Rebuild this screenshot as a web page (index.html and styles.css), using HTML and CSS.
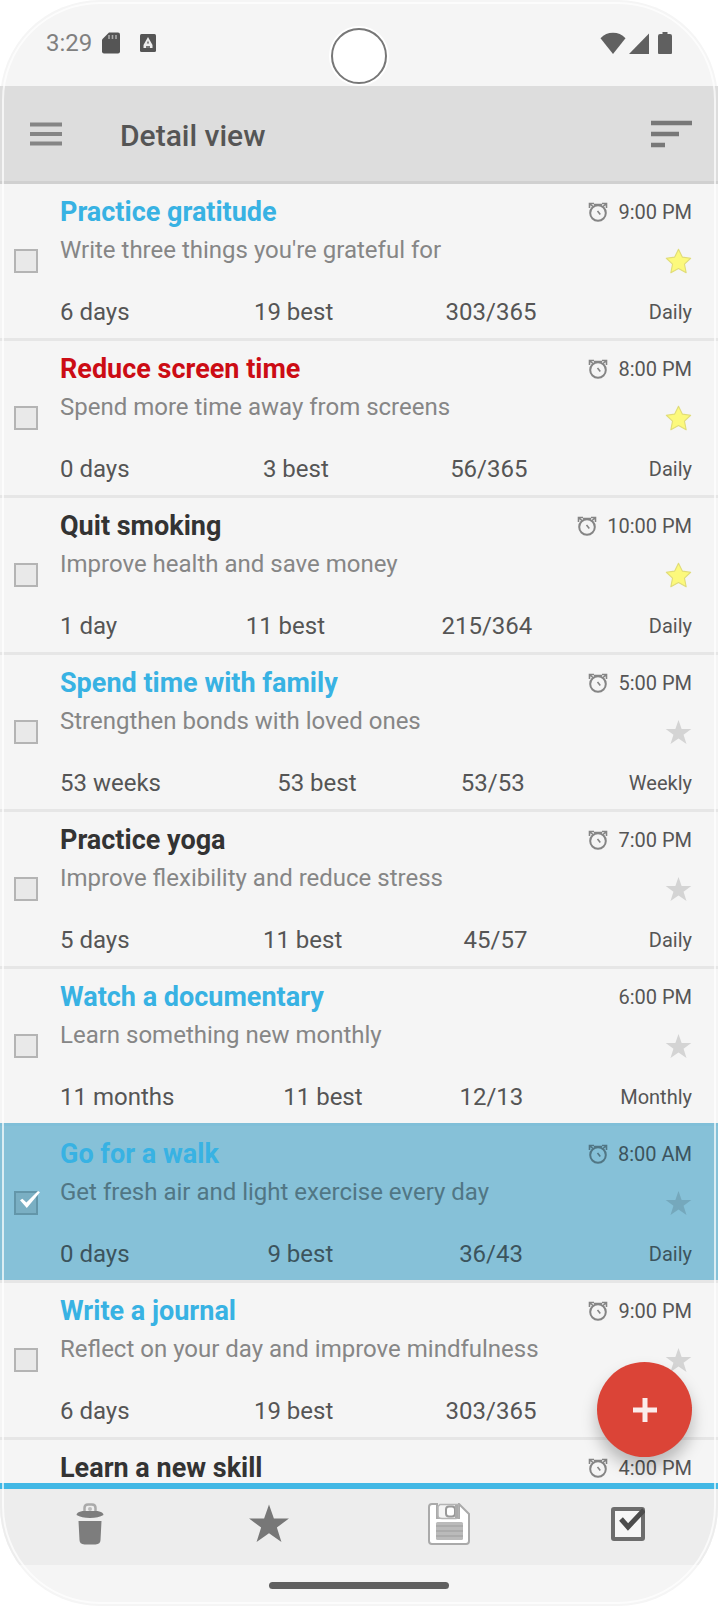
FILE: index.html
```html
<!DOCTYPE html>
<html lang="en">
<head>
    <meta charset="UTF-8">
    <meta name="viewport" content="width=device-width, initial-scale=1.0">
    <title>Detail view</title>
    <link rel="stylesheet" href="styles.css">
</head>
<body>
    <!-- Shared icons -->
    <svg class="icon-defs" aria-hidden="true">
        <symbol id="icon-star" viewBox="0 0 24 24">
            <path d="M12 0.8l2.8 8.1h8.6l-6.9 5.1 2.6 8.3L12 17.3l-7.1 5 2.6-8.3L0.6 8.9h8.6z"/>
        </symbol>
        <symbol id="icon-star-wide" viewBox="0 0 24 24">
            <path d="M12 1.2l3.4 6.9 7.4 1-5.500 5.200 1.500 7.700L12 18.300 5.200 22l1.500-7.700L1.200 9.100l7.400-1z" stroke-linejoin="round"/>
        </symbol>
        <symbol id="icon-alarm" viewBox="0 0 20 20">
            <circle cx="10" cy="11" r="7.8" fill="none" stroke="currentColor" stroke-width="2"/>
            <path d="M1.500 6V1.500H6M18.500 6V1.500H14M2 2l3 2.500M18 2l-3 2.500M6 2.600h8M9.500 9l2.800 3.500" fill="none" stroke="currentColor" stroke-width="1.600"/>
        </symbol>
    </svg>

    <div class="phone">
        <!-- Status bar -->
        <div class="status-bar">
            <div class="status-left">
                <span class="clock">3:29</span>
                <svg class="sd-icon" width="18" height="22" viewBox="0 0 18 22">
                    <path d="M7 0.5h9a2 2 0 0 1 2 2v17a2 2 0 0 1-2 2H2a2 2 0 0 1-2-2V7.5z" fill="#555"/>
                    <path d="M7 3v4M10.5 3v4M14 3v4" stroke="#aaa" stroke-width="1.6"/>
                </svg>
                <svg width="16" height="18" viewBox="0 0 16 18">
                    <rect width="16" height="18" rx="1.5" fill="#555"/>
                    <path d="M8 3l4.5 8v3h-9v-3z" fill="#eee"/>
                    <path d="M8 6.5l1.2 3H6.8zM6 12h4v2H6z" fill="#777"/>
                </svg>
            </div>
            <div class="status-right">
                <svg width="26" height="22" viewBox="0 0 26 22"><path d="M13 22L0.5 6.2C4 2.600 8.200 0.800 13 0.800s9 1.800 12.500 5.400z"/></svg>
                <svg width="20" height="22" viewBox="0 0 20 22"><path d="M20 1.500V22H0z"/></svg>
                <svg class="battery-icon" width="14" height="22" viewBox="0 0 14 22"><path d="M4.500 0h5v2H12a2 2 0 0 1 2 2v17a1 1 0 0 1-1 1H1a1 1 0 0 1-1-1V4a2 2 0 0 1 2-2h2.500z"/></svg>
            </div>
            <div class="camera"></div>
        </div>

        <!-- App bar -->
        <header class="app-bar">
            <button class="icon-button" aria-label="Menu">
                <svg width="32" height="24" viewBox="0 0 32 24"><path d="M0 2.500h32M0 12h32M0 21.500h32" stroke="#858585" stroke-width="4"/></svg>
            </button>
            <h1>Detail view</h1>
            <button class="icon-button" aria-label="Sort">
                <svg width="41" height="28" viewBox="0 0 41 28"><path d="M0 3h41M0 14h28M0 25h14" stroke="#787878" stroke-width="4.500"/></svg>
            </button>
        </header>

        <!-- Habit list -->
        <main class="content">
            <ul class="habit-list" id="habitList"></ul>
            <button class="fab" aria-label="Add">
                <svg width="24" height="24" viewBox="0 0 24 24"><path d="M12 0v24M0 12h24" stroke="#fbeceb" stroke-width="5"/></svg>
            </button>
        </main>

        <!-- Bottom toolbar -->
        <footer class="footer">
            <div class="toolbar">
                <button class="icon-button" aria-label="Delete">
                    <svg width="28" height="42" viewBox="0 0 28 42">
                        <path d="M8.500 9V5q0-3.500 3.500-3.500h4q3.500 0 3.500 3.500v4" fill="none" stroke="#aaa" stroke-width="2.500"/>
                        <circle cx="14" cy="6" r="2" fill="#bbb"/>
                        <path d="M0.500 12q0-3 6-4h15q6 1 6 4-5 3-13.500 3T0.500 12z" fill="#7d7d7d"/>
                        <path d="M2.500 18h23l-1 19q0 4-5 4.500H8.500q-5-.5-5-4.500z" fill="#7d7d7d"/>
                    </svg>
                </button>
                <button class="icon-button" aria-label="Favorite">
                    <svg width="42" height="42" fill="#777"><use href="#icon-star"/></svg>
                </button>
                <button class="icon-button" aria-label="Save">
                    <svg width="42" height="42" viewBox="0 0 42 42">
                        <path d="M4 1h5v14h22V1l10 10v27q0 3-3 3H4q-3 0-3-3V4q0-3 3-3z" fill="#fff" stroke="#aaa" stroke-width="2"/>
                        <path d="M12 1.500h18v12q0 2-2 2H14q-4 0-4-3V3.500z" fill="#f4f4f4" stroke="#b4b4b4" stroke-width="1.500"/>
                        <rect x="18" y="3.500" width="9" height="10" rx="3" fill="#fff" stroke="#999" stroke-width="2"/>
                        <path d="M28.500 2v13" stroke="#aaa" stroke-width="3"/>
                        <rect x="8" y="19" width="27" height="18" rx="1.500" fill="#bababa"/>
                        <path d="M8 23h27M8 28h27M8 33h27" stroke="#a6a6a6" stroke-width="1.500"/>
                    </svg>
                </button>
                <button class="icon-button" aria-label="Select all">
                    <svg width="34" height="34" viewBox="0 0 34 34">
                        <rect x="2" y="2" width="30" height="30" rx="1" fill="#f6f6f6" stroke="#6d6d6d" stroke-width="4"/>
                        <path d="M10 12l7 8L33 3" fill="none" stroke="#4c4c4c" stroke-width="5"/>
                    </svg>
                </button>
            </div>
            <div class="nav-bar"><div class="nav-handle"></div></div>
        </footer>
    </div>

    <script src="script.js"></script>
</body>
</html>
```

FILE: styles.css
```css
* {
    margin: 0;
    padding: 0;
    box-sizing: border-box;
}

body {
    font-family: Roboto, "Noto Sans", sans-serif;
    background: #fff;
    color: #555;
    padding-right: 2px;
}

button {
    background: none;
    border: none;
    font: inherit;
    cursor: pointer;
}

svg {
    display: block;
    flex-shrink: 0;
}

.icon-defs {
    position: absolute;
    width: 0;
    height: 0;
}

.icon-button {
    display: flex;
    align-items: center;
    justify-content: center;
}

/* Phone frame */
.phone {
    position: relative;
    display: flex;
    flex-direction: column;
    height: 100vh;
    background: #f5f5f5;
    border-radius: 100px;
}

.phone::after {
    content: "";
    position: absolute;
    inset: 2px;
    border: 2px solid rgba(255, 255, 255, 0.7);
    border-radius: 98px;
    pointer-events: none;
}

/* Status bar */
.status-bar {
    position: relative;
    display: flex;
    justify-content: space-between;
    align-items: center;
    height: 86px;
    padding: 0 46px;
}

.status-left,
.status-right {
    display: flex;
    align-items: center;
}

.status-right {
    gap: 3px;
    fill: #606060;
}

.battery-icon {
    margin-left: 6px;
}

.clock {
    font-size: 24px;
    color: #808080;
}

.sd-icon {
    margin: 0 20px 0 10px;
}

.camera {
    position: absolute;
    top: 28px;
    left: 50%;
    width: 56px;
    height: 56px;
    margin-left: -28px;
    background: #fff;
    border: 2px solid #777;
    border-radius: 50%;
    box-shadow: 0 0 0 2px #fff;
}

/* App bar */
.app-bar {
    display: flex;
    align-items: center;
    height: 95px;
    padding: 0 26px 0 30px;
    background: #ddd;
}

.app-bar h1 {
    flex: 1;
    margin-left: 58px;
    padding-top: 3px;
    font-size: 30px;
    font-weight: 500;
    color: #555;
}

/* Habit list */
.content {
    position: relative;
    flex: 1;
    min-height: 0;
}

.habit-list {
    height: 100%;
    overflow: hidden;
    list-style: none;
}

.habit {
    display: flex;
    align-items: center;
    height: 157px;
    padding: 0 26px 0 14px;
    border-top: 3px solid #e6e6e6;
}

.habit:first-child {
    border-top-color: #d0d0d0;
}

.habit.selected {
    background: #86c1d8;
    border-top-color: #80bfd8;
}

.habit-check {
    appearance: none;
    position: relative;
    flex-shrink: 0;
    width: 24px;
    height: 24px;
    margin-right: 22px;
    background: #e9e9e9;
    border: 2px solid #b4b4b4;
}

.habit-check:checked {
    background: #7aafc3;
    border-color: #6396a9;
}

.habit-check:checked::after {
    content: "";
    position: absolute;
    top: -2px;
    left: 4px;
    width: 20px;
    height: 17px;
    background: #fff;
    clip-path: polygon(0 55%, 12% 45%, 32% 68%, 90% 0, 100% 8%, 34% 100%);
}

.habit-body {
    flex: 1;
    align-self: flex-start;
    padding-top: 12px;
}

.habit-line {
    display: flex;
    justify-content: space-between;
    align-items: center;
}

.habit-title {
    font-size: 27px;
    line-height: 32px;
    font-weight: 700;
    color: #333;
}

.habit-title.blue {
    color: #38b2e3;
}

.habit-title.red {
    color: #cc0c14;
}

.habit-time {
    display: flex;
    align-items: center;
    gap: 10px;
    font-size: 20px;
    line-height: 28px;
}

.habit-time svg {
    color: #858585;
}

.habit-desc {
    font-size: 24px;
    line-height: 28px;
    color: #868686;
}

.middle {
    align-items: flex-start;
    height: 68px;
    padding-top: 8px;
}

.star {
    margin-top: 12px;
    fill: #d4d4d4;
}

.star.on {
    fill: #fcf97c;
    stroke: #e0dc78;
    stroke-width: 1px;
}

.stats {
    font-size: 24px;
    line-height: 32px;
}

.stats .best {
    margin-left: 12px;
}

.stats .period {
    font-size: 20px;
}

.selected .habit-desc {
    color: #517684;
}

.selected .habit-time,
.selected .stats {
    color: #3c545d;
}

.selected .habit-time svg {
    color: #517684;
}

.selected .star {
    fill: #75a8bc;
}

/* Add button */
.fab {
    position: absolute;
    right: 26px;
    bottom: 26px;
    display: flex;
    align-items: center;
    justify-content: center;
    width: 95px;
    height: 95px;
    background: #db4437;
    border-radius: 50%;
    box-shadow: 0 10px 16px rgba(0, 0, 0, 0.25);
}

/* Footer */
.footer {
    overflow: hidden;
    border-radius: 0 0 100px 100px;
}

.toolbar {
    display: grid;
    grid-template-columns: repeat(4, 1fr);
    height: 82px;
    padding-bottom: 6px;
    background: #ededed;
    border-top: 6px solid #42b8e5;
}

.nav-bar {
    display: flex;
    align-items: center;
    justify-content: center;
    height: 41px;
}

.nav-handle {
    width: 25%;
    height: 7px;
    background: #606060;
    border-radius: 4px;
}
```

FILE: script.js
```js
const habits = [
    { title: "Practice gratitude", color: "blue", desc: "Write three things you're grateful for", time: "9:00 PM", alarm: true, star: true, stats: ["6 days", "19 best", "303/365"], period: "Daily" },
    { title: "Reduce screen time", color: "red", desc: "Spend more time away from screens", time: "8:00 PM", alarm: true, star: true, stats: ["0 days", "3 best", "56/365"], period: "Daily" },
    { title: "Quit smoking", color: "", desc: "Improve health and save money", time: "10:00 PM", alarm: true, star: true, stats: ["1 day", "11 best", "215/364"], period: "Daily" },
    { title: "Spend time with family", color: "blue", desc: "Strengthen bonds with loved ones", time: "5:00 PM", alarm: true, stats: ["53 weeks", "53 best", "53/53"], period: "Weekly" },
    { title: "Practice yoga", color: "", desc: "Improve flexibility and reduce stress", time: "7:00 PM", alarm: true, stats: ["5 days", "11 best", "45/57"], period: "Daily" },
    { title: "Watch a documentary", color: "blue", desc: "Learn something new monthly", time: "6:00 PM", alarm: false, stats: ["11 months", "11 best", "12/13"], period: "Monthly" },
    { title: "Go for a walk", color: "blue", desc: "Get fresh air and light exercise every day", time: "8:00 AM", alarm: true, selected: true, stats: ["0 days", "9 best", "36/43"], period: "Daily" },
    { title: "Write a journal", color: "blue", desc: "Reflect on your day and improve mindfulness", time: "9:00 PM", alarm: true, stats: ["6 days", "19 best", "303/365"], period: "Daily" },
    { title: "Learn a new skill", color: "", time: "4:00 PM", alarm: true }
];

const alarmIcon = '<svg width="20" height="20"><use href="#icon-alarm"/></svg>';

// Lower part of a row: description, star and the counters
function renderDetails(habit) {
    if (!habit.desc) return '';
    const starIcon = habit.star ? 'icon-star-wide' : 'icon-star';
    return `
        <div class="habit-line middle">
            <p class="habit-desc">${habit.desc}</p>
            <button class="star ${habit.star ? 'on' : ''}" aria-label="Favorite">
                <svg width="27" height="27"><use href="#${starIcon}"/></svg>
            </button>
        </div>
        <div class="habit-line stats">
            <span>${habit.stats[0]}</span>
            <span class="best">${habit.stats[1]}</span>
            <span>${habit.stats[2]}</span>
            <span class="period">${habit.period}</span>
        </div>
    `;
}

function renderHabits() {
    const list = document.getElementById('habitList');

    habits.forEach((habit, i) => {
        const row = document.createElement('li');
        row.className = habit.selected ? 'habit selected' : 'habit';
        row.innerHTML = `
            <input type="checkbox" class="habit-check" id="habit${i}" ${habit.selected ? 'checked' : ''}>
            <div class="habit-body">
                <div class="habit-line">
                    <label class="habit-title ${habit.color}" for="habit${i}">${habit.title}</label>
                    <span class="habit-time">${habit.alarm ? alarmIcon : ''}${habit.time}</span>
                </div>
                ${renderDetails(habit)}
            </div>
        `;
        list.appendChild(row);
    });
}

renderHabits();
```
